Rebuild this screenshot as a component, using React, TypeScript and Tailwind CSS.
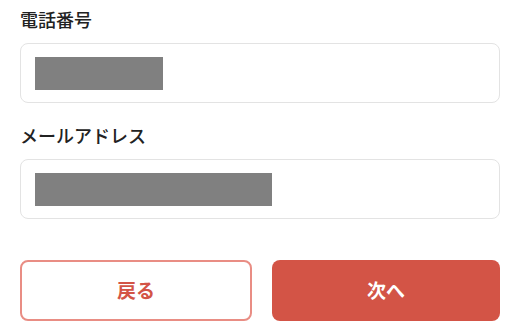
import React from 'react';

function Field({ label, fill }: { label: string; fill: string }) {
  return (
    <div className="flex flex-col">
      <label className="h-[24px] text-[18px] leading-[24px] font-medium text-[#222222]">{label}</label>
      <div className="mt-[12px] flex h-[60px] items-center rounded-[8px] border border-[#e3e3e3] bg-white px-[14px]">
        <div className={`h-[33px] bg-[#808080] ${fill}`} />
      </div>
    </div>
  );
}

export default function App() {
  return (
    <div
      className="min-h-screen w-[520px] bg-white px-[20px] pt-[7px]"
      style={{ fontFamily: '"Noto Sans CJK JP", "Noto Sans", sans-serif' }}
    >
      <Field label="電話番号" fill="w-[128px]" />
      <div className="mt-[20px]">
        <Field label="メールアドレス" fill="w-[237px]" />
      </div>

      {/* Buttons */}
      <div className="mt-[41px] flex gap-[20px]">
        <button className="flex h-[61px] flex-1 items-center justify-center rounded-[8px] border-2 border-[#e98d84] bg-white text-[19px] font-bold text-[#d35446]">
          戻る
        </button>
        <button className="flex h-[61px] flex-1 items-center justify-center rounded-[8px] bg-[#d35446] text-[19px] font-bold text-white">
          次へ
        </button>
      </div>
    </div>
  );
}
